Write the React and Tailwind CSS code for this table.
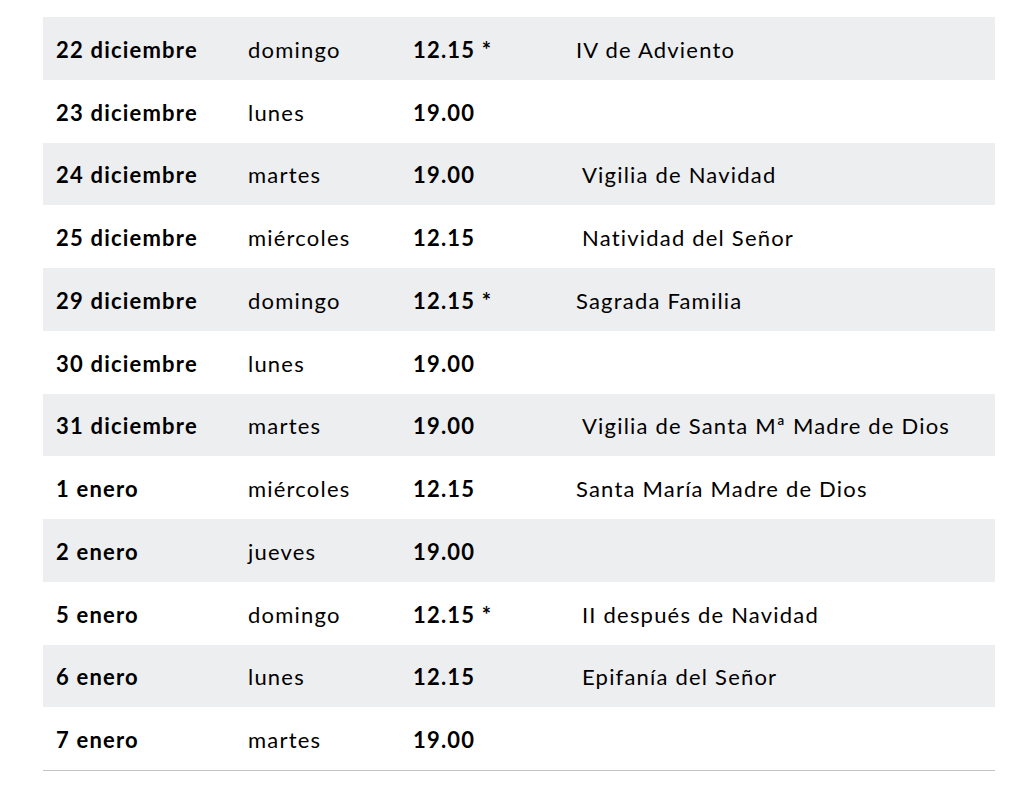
const rows = [
  ["22 diciembre", "domingo", "12.15 *", "IV de Adviento", false],
  ["23 diciembre", "lunes", "19.00", "", false],
  ["24 diciembre", "martes", "19.00", "Vigilia de Navidad", true],
  ["25 diciembre", "miércoles", "12.15", "Natividad del Señor", true],
  ["29 diciembre", "domingo", "12.15 *", "Sagrada Familia", false],
  ["30 diciembre", "lunes", "19.00", "", false],
  ["31 diciembre", "martes", "19.00", "Vigilia de Santa Mª Madre de Dios", true],
  ["1 enero", "miércoles", "12.15", "Santa María Madre de Dios", false],
  ["2 enero", "jueves", "19.00", "", false],
  ["5 enero", "domingo", "12.15 *", "II después de Navidad", true],
  ["6 enero", "lunes", "12.15", "Epifanía del Señor", true],
  ["7 enero", "martes", "19.00", "", false],
];

export default function App() {
  return (
    <div className="w-[1024px] h-[790px] bg-white pt-[17px] text-black" style={{ fontFamily: "Lato, 'Noto Sans', sans-serif" }}>
      <div className="ml-[43px] w-[952px] border-b border-[#c4c4c4]">
        {rows.map((r, i) => (
          <div
            key={i}
            className={`grid grid-cols-[205px_165px_163px_1fr] items-center h-[62.75px] text-[22px] tracking-[1.2px] pt-[2px] ${i % 2 === 0 ? "bg-[#edeef0]" : "bg-white"}`}
          >
            <div className="pl-[13px] font-bold">{r[0]}</div>
            <div>{r[1]}</div>
            <div className="font-bold">{r[2]}</div>
            <div className={r[4] ? "pl-[6px]" : ""}>{r[3]}</div>
          </div>
        ))}
      </div>
    </div>
  );
}
